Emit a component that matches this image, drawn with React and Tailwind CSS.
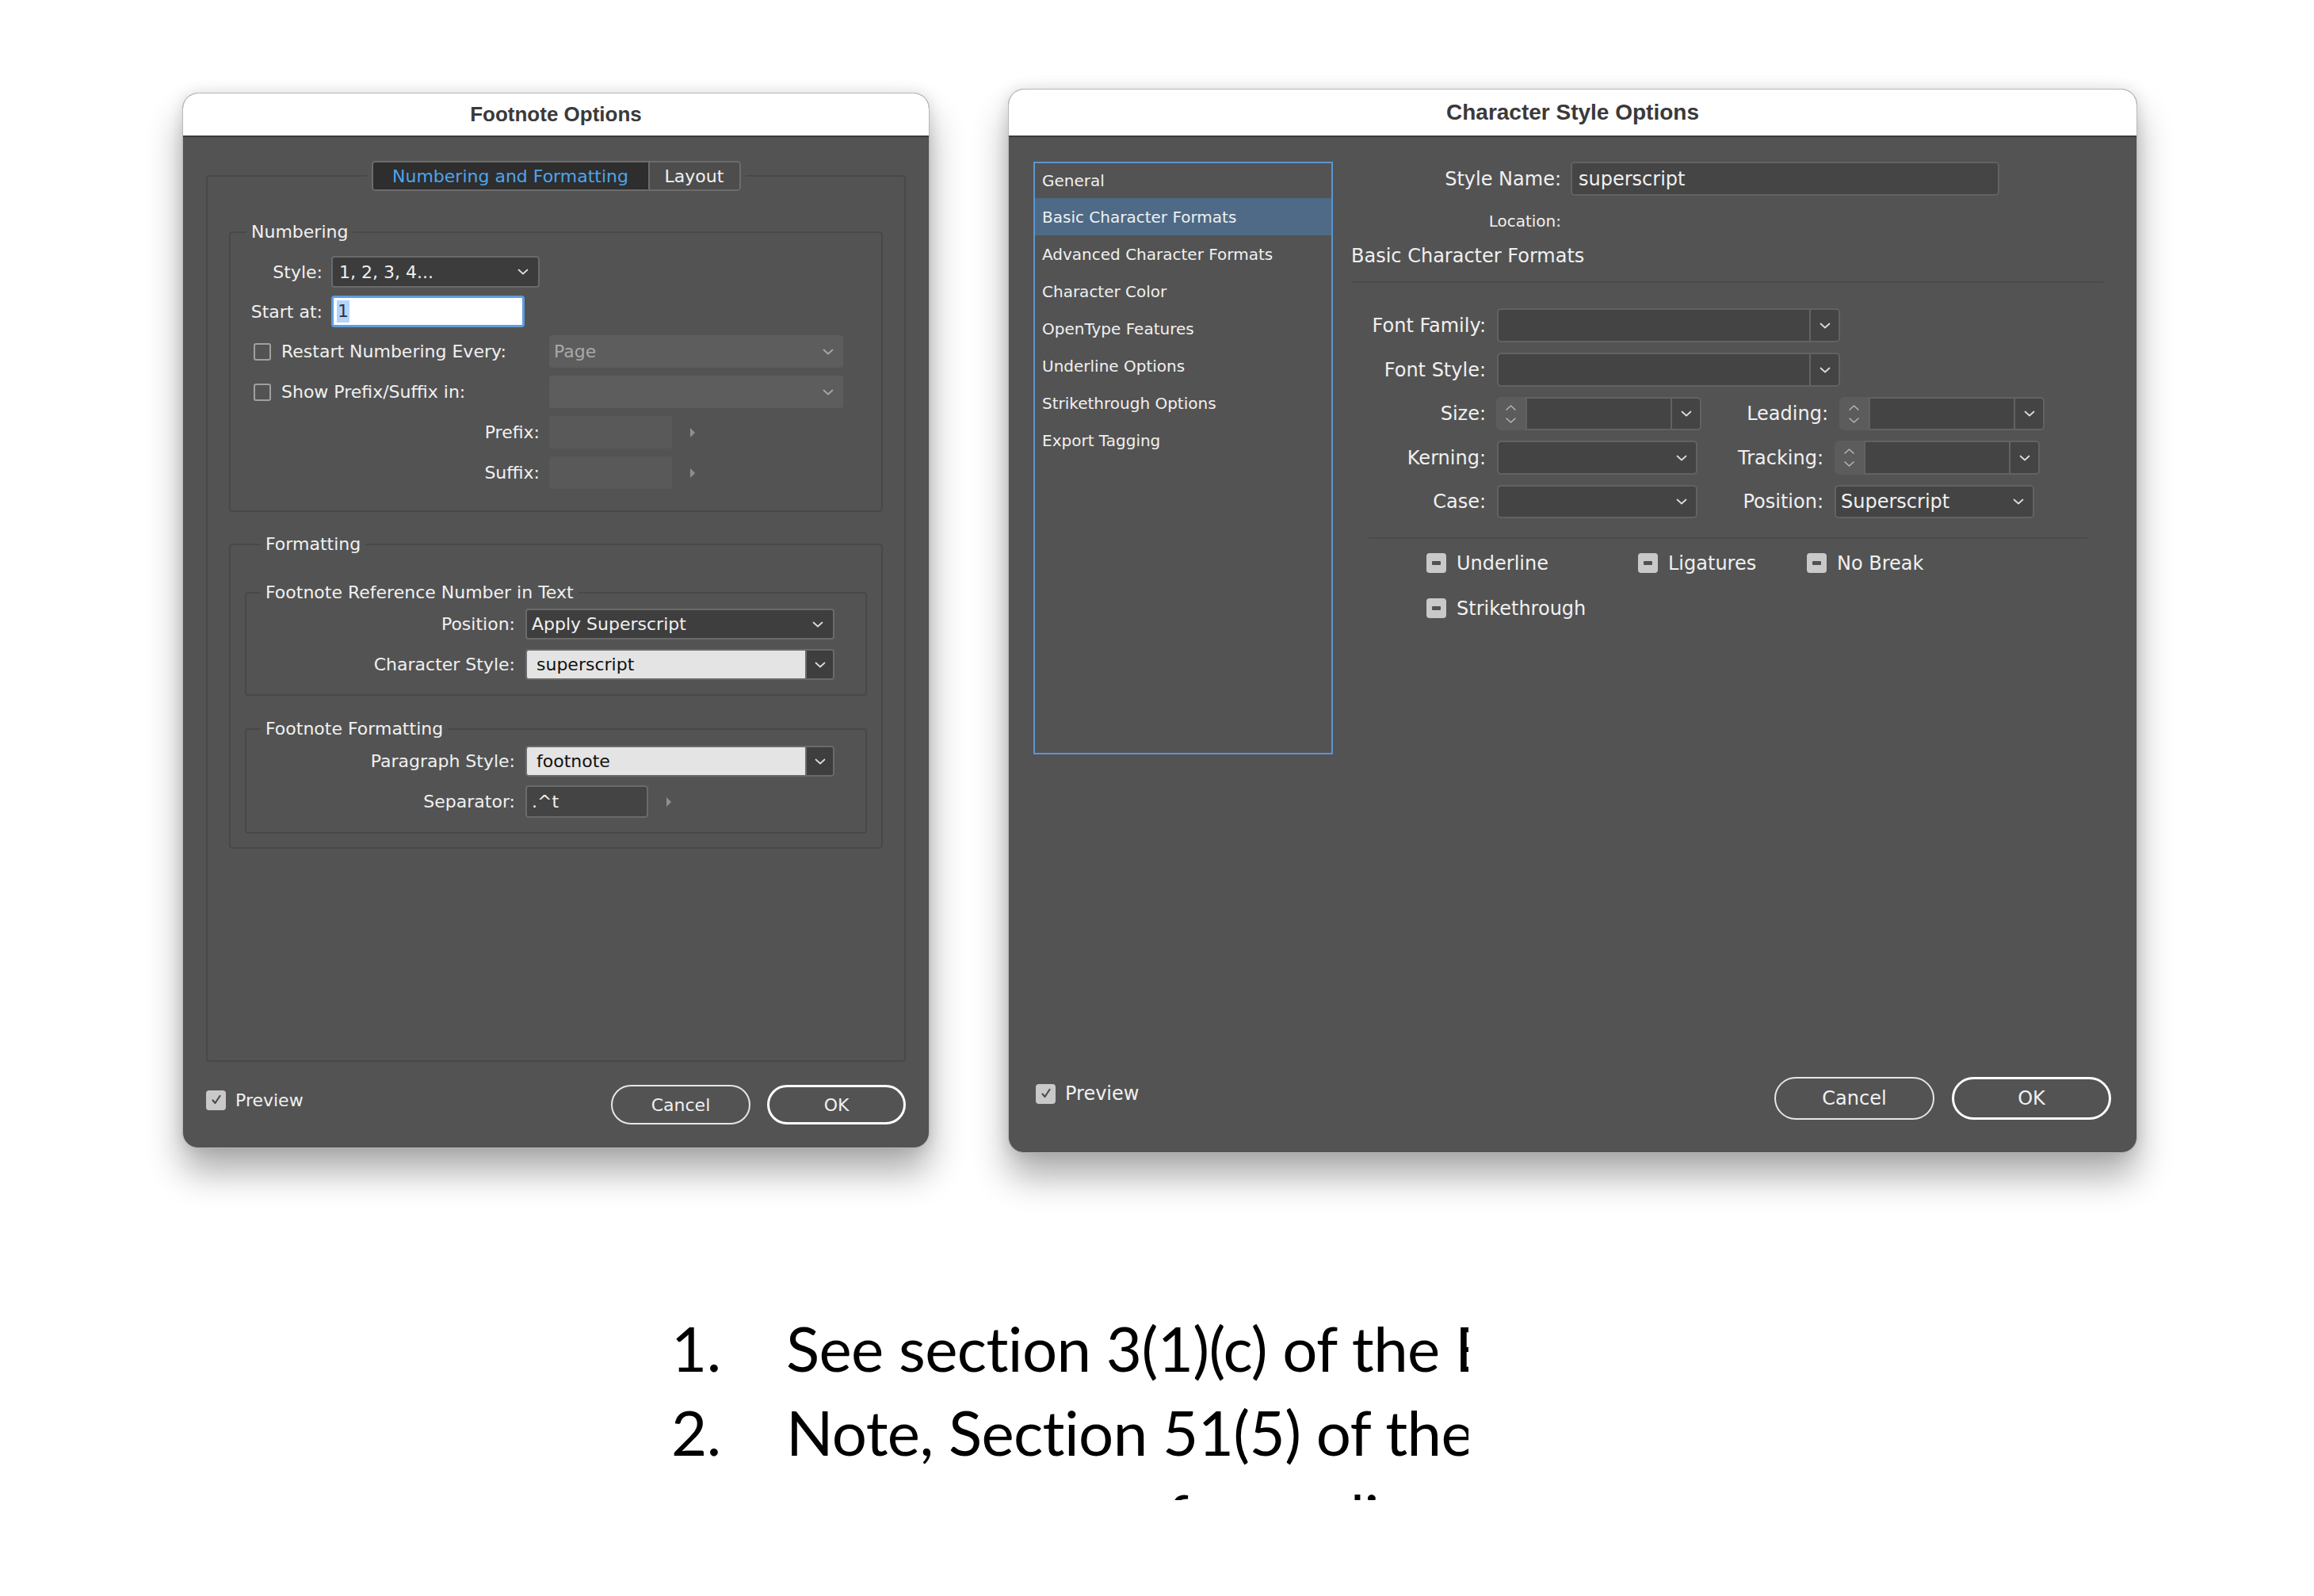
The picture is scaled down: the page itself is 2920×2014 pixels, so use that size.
import React from "react";

const UI = "font-['DejaVu_Sans',sans-serif]";
const SHADOW =
  "shadow-[0_30px_45px_rgba(0,0,0,0.32),0_0_18px_rgba(0,0,0,0.12)]";

function Chevron({ c = "#dedede" }) {
  return (
    <svg width="14" height="8" viewBox="0 0 14 8" className="shrink-0">
      <path
        d="M1.5 1.5 7 6.5 12.5 1.5"
        fill="none"
        stroke={c}
        strokeWidth="1.7"
        strokeLinecap="round"
        strokeLinejoin="round"
      />
    </svg>
  );
}

function Tri() {
  return (
    <svg width="8" height="14" viewBox="0 0 8 14" className="shrink-0">
      <path d="M1 1 7 7 1 13Z" fill="#8f8f8f" />
    </svg>
  );
}

function Mixed() {
  return (
    <div className="w-[25px] h-[25px] shrink-0 rounded-[4px] bg-[#c9c9c9] flex items-center justify-center">
      <div className="w-[11px] h-[5px] rounded-[1px] bg-[#515151]" />
    </div>
  );
}

function Checked() {
  return (
    <div className="w-[25px] h-[25px] shrink-0 rounded-[4px] bg-[#c9c9c9] flex items-center justify-center">
      <svg width="16" height="16" viewBox="0 0 16 16">
        <path
          d="M3.5 8.5 6.5 12 12.5 3"
          fill="none"
          stroke="#4c4c4c"
          strokeWidth="2.2"
          strokeLinecap="round"
          strokeLinejoin="round"
        />
      </svg>
    </div>
  );
}

function Spinner() {
  return (
    <div className="w-[37px] h-full shrink-0 bg-[#5c5c5c] rounded-l-[6px] flex flex-col items-center justify-center gap-[9px]">
      <svg width="13" height="7" viewBox="0 0 13 7">
        <path d="M1 6 6.5 1 12 6" fill="none" stroke="#b9b9b9" strokeWidth="1.4" strokeLinecap="round" strokeLinejoin="round" />
      </svg>
      <svg width="13" height="7" viewBox="0 0 13 7">
        <path d="M1 1 6.5 6 12 1" fill="none" stroke="#b9b9b9" strokeWidth="1.4" strokeLinecap="round" strokeLinejoin="round" />
      </svg>
    </div>
  );
}

function Drop({ className = "", text = "", split = true, squareLeft = false }) {
  return (
    <div
      className={`h-full flex border-2 border-[#626262] bg-[#444444] ${
        squareLeft ? "rounded-r-[5px]" : "rounded-[5px]"
      } ${className}`}
    >
      <div className="flex-1 flex items-center pl-[6px] whitespace-nowrap">{text}</div>
      <div
        className={`w-[37px] shrink-0 flex items-center justify-center ${
          split ? "border-l-2 border-[#626262]" : ""
        }`}
      >
        <Chevron />
      </div>
    </div>
  );
}

function SpinDrop({ className = "" }) {
  return (
    <div className={`h-full flex ${className}`}>
      <Spinner />
      <Drop className="flex-1" squareLeft />
    </div>
  );
}

function FootnoteDialog() {
  return (
    <div
      className={`mt-[5px] w-[943px] h-[1332px] shrink-0 rounded-[20px] overflow-hidden flex flex-col bg-[#535353] border border-[#b8b8b8] ${SHADOW}`}
    >
      <div className="h-[55px] shrink-0 bg-white border-b-2 border-[#3b3b3b] flex items-center justify-center">
        <span className="font-['Liberation_Sans',sans-serif] font-bold text-[26px] text-[#3a3a3a]">
          Footnote Options
        </span>
      </div>
      <div className="flex flex-col px-[29px] pt-[30px] text-[22px] text-[#f0f0f0]">
        <fieldset className="border-2 border-[#484848] rounded-[4px] px-[27px] pt-[38px] h-[1137px]">
          <legend className="mx-auto px-[6px]">
            <div className="flex h-[38px] rounded-[5px] border-2 border-[#6c6c6c] overflow-hidden">
              <div className="w-[347px] bg-[#2e2e2e] text-[#4ea4e8] flex items-center justify-center">
                Numbering and Formatting
              </div>
              <div className="w-[115px] bg-[#4d4d4d] border-l-2 border-[#6c6c6c] flex items-center justify-center">
                Layout
              </div>
            </div>
          </legend>

          {/* Numbering */}
          <fieldset className="border-2 border-[#484848] rounded-[4px] pt-[16px] pb-[27px]">
            <legend className="ml-[20px] px-[6px] leading-[28px]">Numbering</legend>
            <div className="flex flex-col gap-[10px]">
              <div className="flex items-center h-[40px]">
                <span className="w-[116px] text-right">Style:</span>
                <div className="ml-[11px] w-[263px] h-full rounded-[4px] border-2 border-[#6a6a6a] bg-[#3c3c3c] flex items-center justify-between pl-[8px] pr-[12px]">
                  <span>1, 2, 3, 4...</span>
                  <Chevron />
                </div>
              </div>
              <div className="flex items-center h-[40px]">
                <span className="w-[116px] text-right">Start at:</span>
                <div className="ml-[11px] w-[244px] h-full rounded-[4px] border-[3px] border-[#5c9ee0] bg-white flex items-center pl-[4px]">
                  <span className="bg-[#b3d4fc] text-[#333333] px-[1px] leading-[28px]">1</span>
                </div>
              </div>
              <div className="flex items-center h-[41px]">
                <div className="w-[402px] flex items-center pl-[29px]">
                  <div className="w-[22px] h-[22px] rounded-[3px] border-2 border-[#a0a0a0]" />
                  <span className="ml-[13px]">Restart Numbering Every:</span>
                </div>
                <div className="w-[371px] h-full rounded-[4px] bg-[#5d5d5d] flex items-center justify-between pl-[6px] pr-[12px] text-[#a9a9a9]">
                  <span>Page</span>
                  <Chevron c="#a9a9a9" />
                </div>
              </div>
              <div className="flex items-center h-[41px]">
                <div className="w-[402px] flex items-center pl-[29px]">
                  <div className="w-[22px] h-[22px] rounded-[3px] border-2 border-[#a0a0a0]" />
                  <span className="ml-[13px]">Show Prefix/Suffix in:</span>
                </div>
                <div className="w-[371px] h-full rounded-[4px] bg-[#5d5d5d] flex items-center justify-end pr-[12px]">
                  <Chevron c="#a9a9a9" />
                </div>
              </div>
              <div className="flex items-center h-[41px]">
                <span className="w-[390px] text-right">Prefix:</span>
                <div className="ml-[12px] w-[155px] h-full rounded-[4px] bg-[#595959]" />
                <div className="ml-[22px]">
                  <Tri />
                </div>
              </div>
              <div className="flex items-center h-[41px]">
                <span className="w-[390px] text-right">Suffix:</span>
                <div className="ml-[12px] w-[155px] h-full rounded-[4px] bg-[#595959]" />
                <div className="ml-[22px]">
                  <Tri />
                </div>
              </div>
            </div>
          </fieldset>

          {/* Formatting */}
          <fieldset className="mt-[27px] border-2 border-[#484848] rounded-[4px] px-[18px] pt-[33px] pb-[17px]">
            <legend className="ml-[20px] px-[6px] leading-[28px]">Formatting</legend>

            <fieldset className="border-2 border-[#484848] rounded-[4px] pt-[6px] pb-[18px]">
              <legend className="ml-[18px] px-[6px] leading-[28px]">Footnote Reference Number in Text</legend>
              <div className="flex flex-col gap-[12px]">
                <div className="flex items-center h-[39px]">
                  <span className="w-[339px] text-right">Position:</span>
                  <div className="ml-[13px] w-[390px] h-full rounded-[4px] border-2 border-[#6a6a6a] bg-[#3e3e3e] flex items-center justify-between pl-[6px] pr-[12px]">
                    <span>Apply Superscript</span>
                    <Chevron />
                  </div>
                </div>
                <div className="flex items-center h-[39px]">
                  <span className="w-[339px] text-right">Character Style:</span>
                  <div className="ml-[13px] w-[390px] h-full rounded-[4px] border-2 border-[#6a6a6a] flex overflow-hidden">
                    <div className="flex-1 bg-[#e4e4e4] text-[#111111] flex items-center pl-[12px]">superscript</div>
                    <div className="w-[35px] bg-[#3e3e3e] border-l-2 border-[#6a6a6a] flex items-center justify-center">
                      <Chevron />
                    </div>
                  </div>
                </div>
              </div>
            </fieldset>

            <fieldset className="mt-[28px] border-2 border-[#484848] rounded-[4px] pt-[7px] pb-[18px]">
              <legend className="ml-[18px] px-[6px] leading-[28px]">Footnote Formatting</legend>
              <div className="flex flex-col gap-[11px]">
                <div className="flex items-center h-[39px]">
                  <span className="w-[339px] text-right">Paragraph Style:</span>
                  <div className="ml-[13px] w-[390px] h-full rounded-[4px] border-2 border-[#6a6a6a] flex overflow-hidden">
                    <div className="flex-1 bg-[#e4e4e4] text-[#111111] flex items-center pl-[12px]">footnote</div>
                    <div className="w-[35px] bg-[#3e3e3e] border-l-2 border-[#6a6a6a] flex items-center justify-center">
                      <Chevron />
                    </div>
                  </div>
                </div>
                <div className="flex items-center h-[41px]">
                  <span className="w-[339px] text-right">Separator:</span>
                  <div className="ml-[13px] w-[155px] h-full rounded-[4px] border-2 border-[#6a6a6a] bg-[#444444] flex items-center pl-[6px]">
                    .^t
                  </div>
                  <div className="ml-[22px]">
                    <Tri />
                  </div>
                </div>
              </div>
            </fieldset>
          </fieldset>
        </fieldset>

        <div className="mt-[29px] h-[50px] flex items-center justify-between">
          <div className="flex items-center mb-[12px]">
            <Checked />
            <span className="ml-[12px]">Preview</span>
          </div>
          <div className="flex items-center gap-[21px]">
            <div className="w-[176px] h-[50px] rounded-full border-2 border-[#e6e6e6] flex items-center justify-center">
              Cancel
            </div>
            <div className="w-[175px] h-[50px] rounded-full border-[3px] border-white flex items-center justify-center">
              OK
            </div>
          </div>
        </div>
      </div>
    </div>
  );
}

function CharDialog() {
  const items = [
    "General",
    "Basic Character Formats",
    "Advanced Character Formats",
    "Character Color",
    "OpenType Features",
    "Underline Options",
    "Strikethrough Options",
    "Export Tagging",
  ];
  return (
    <div
      className={`w-[1425px] h-[1343px] shrink-0 rounded-[20px] overflow-hidden flex flex-col bg-[#535353] border border-[#b8b8b8] ${SHADOW}`}
    >
      <div className="h-[60px] shrink-0 bg-white border-b-2 border-[#3b3b3b] flex items-center justify-center">
        <span className="font-['Liberation_Sans',sans-serif] font-bold text-[28px] text-[#3a3a3a]">
          Character Style Options
        </span>
      </div>
      <div className="flex-1 flex flex-col text-[24px] text-[#f0f0f0]">
        <div className="flex pl-[31px] pt-[31px]">
          <div className="w-[378px] h-[748px] shrink-0 border-2 border-[#5a96d2] flex flex-col text-[20px]">
            {items.map((t, i) => (
              <div
                key={t}
                className={`${i === 0 ? "h-[44px]" : "h-[47px]"} shrink-0 flex items-center pl-[9px] ${
                  i === 1 ? "bg-[#4e6a86]" : ""
                }`}
              >
                {t}
              </div>
            ))}
          </div>

          <div className="ml-[23px] w-[949px] flex flex-col">
            <div className="flex items-center h-[43px]">
              <span className="w-[265px] text-right">Style Name:</span>
              <div className="ml-[12px] w-[541px] h-full rounded-[5px] border-2 border-[#626262] bg-[#454545] flex items-center pl-[8px]">
                superscript
              </div>
            </div>
            <div className="mt-[20px] h-[24px] flex items-center">
              <span className="w-[265px] text-right text-[20px]">Location:</span>
            </div>
            <div className="mt-[17px] h-[30px] flex items-center">Basic Character Formats</div>
            <div className="mt-[17px] h-[2px] bg-[#4a4a4a]" />

            <div className="mt-[32px] flex items-center h-[43px]">
              <span className="w-[170px] text-right">Font Family:</span>
              <Drop className="ml-[14px] w-[433px]" />
            </div>
            <div className="mt-[13px] flex items-center h-[43px]">
              <span className="w-[170px] text-right">Font Style:</span>
              <Drop className="ml-[14px] w-[433px]" />
            </div>
            <div className="mt-[13px] flex items-center h-[42px]">
              <span className="w-[170px] text-right">Size:</span>
              <SpinDrop className="ml-[13px] w-[259px]" />
              <span className="w-[160px] text-right">Leading:</span>
              <SpinDrop className="ml-[14px] w-[259px]" />
            </div>
            <div className="mt-[13px] flex items-center h-[43px]">
              <span className="w-[170px] text-right">Kerning:</span>
              <Drop split={false} className="ml-[14px] w-[253px]" />
              <span className="w-[159px] text-right">Tracking:</span>
              <SpinDrop className="ml-[14px] w-[259px]" />
            </div>
            <div className="mt-[13px] flex items-center h-[42px]">
              <span className="w-[170px] text-right">Case:</span>
              <Drop split={false} className="ml-[14px] w-[253px]" />
              <span className="w-[159px] text-right">Position:</span>
              <Drop split={false} text="Superscript" className="ml-[14px] w-[252px]" />
            </div>
            <div className="mt-[24px] ml-[22px] w-[907px] h-[2px] bg-[#4a4a4a]" />

            <div className="mt-[18px] h-[25px] flex items-center pl-[95px]">
              <div className="w-[267px] flex items-center">
                <Mixed />
                <span className="ml-[13px]">Underline</span>
              </div>
              <div className="w-[213px] flex items-center">
                <Mixed />
                <span className="ml-[13px]">Ligatures</span>
              </div>
              <div className="flex items-center">
                <Mixed />
                <span className="ml-[13px]">No Break</span>
              </div>
            </div>
            <div className="mt-[32px] h-[25px] flex items-center pl-[95px]">
              <Mixed />
              <span className="ml-[13px]">Strikethrough</span>
            </div>
          </div>
        </div>

        <div className="mt-auto h-[54px] mb-[41px] flex items-center justify-between pl-[34px] pr-[32px]">
          <div className="flex items-center mb-[12px]">
            <Checked />
            <span className="ml-[12px]">Preview</span>
          </div>
          <div className="flex items-center gap-[22px]">
            <div className="w-[202px] h-[54px] rounded-full border-2 border-[#e6e6e6] flex items-center justify-center">
              Cancel
            </div>
            <div className="w-[201px] h-[54px] rounded-full border-[3px] border-white flex items-center justify-center">
              OK
            </div>
          </div>
        </div>
      </div>
    </div>
  );
}

function FootnoteText() {
  return (
    <div className="mt-[193px] ml-[847px] w-[1006px] h-[245px] overflow-hidden font-['Lato',sans-serif] text-[78px] leading-[106px] tracking-[-0.6px] text-black whitespace-nowrap">
      <div className="flex">
        <span className="w-[145px] shrink-0">1.</span>
        <span>See section 3(1)(c) of the Employment Act</span>
      </div>
      <div className="flex">
        <span className="w-[145px] shrink-0">2.</span>
        <span>Note, Section 51(5) of the Act</span>
      </div>
      <div className="flex">
        <span className="w-[145px] shrink-0"></span>
        <span>some means of compliance</span>
      </div>
    </div>
  );
}

export default function App() {
  return (
    <div className={`w-[2920px] h-[2014px] bg-white overflow-hidden ${UI}`}>
      <div className="flex items-start pl-[230px] pt-[112px] gap-[99px]">
        <FootnoteDialog />
        <CharDialog />
      </div>
      <FootnoteText />
    </div>
  );
}
